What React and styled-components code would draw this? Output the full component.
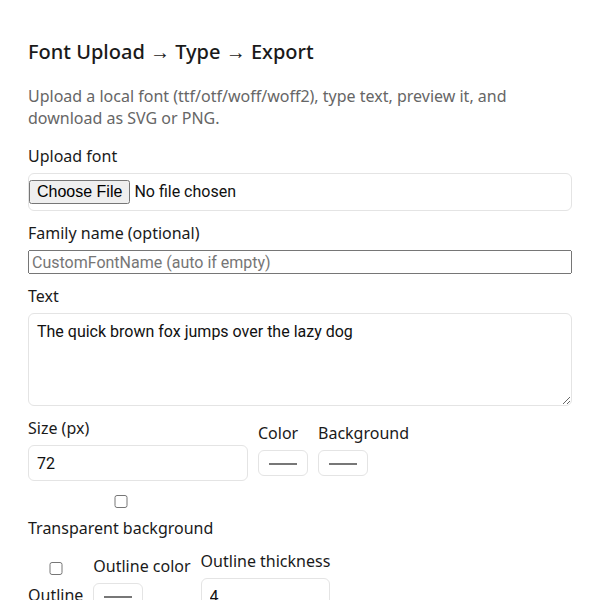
import React, { useState } from "react"
import styled, { createGlobalStyle } from "styled-components"

const GlobalStyle = createGlobalStyle`
  *, *::before, *::after {
    box-sizing: border-box;
  }
  body {
    margin: 0;
    background: #fff;
    color: #1a1a1a;
    font-family: "Noto Sans", "Open Sans", sans-serif;
    font-size: 16px;
  }
`

const Page = styled.main`
  padding: 28px;
`

const Title = styled.h1`
  margin: 10px 0 20px;
  font-size: 20px;
  font-weight: 500;
  line-height: 27px;
`

const Intro = styled.p`
  margin: 0 0 16px;
  color: #666;
  line-height: 22px;
`

const Form = styled.form`
  display: flex;
  flex-direction: column;
  gap: 11px;
`

const Row = styled.div`
  display: flex;
  align-items: center;
  gap: 10px;
`

const Field = styled.label`
  display: flex;
  flex-direction: column;
  gap: 6px;
  width: ${props => (props.width ? `${props.width}px` : "auto")};
  line-height: 22px;
`

const boxed = `
  font-family: Roboto, "Liberation Sans", sans-serif;
  font-size: 16px;
  color: #111;
  background: #fff;
  border: 1px solid #e4e4e4;
  border-radius: 6px;
`

const FileInput = styled.input.attrs({ type: "file" })`
  ${boxed}
  width: 100%;
  height: 38px;
  padding: 6px 0;
`

const TextInput = styled.input.attrs({ type: "text" })`
  width: 100%;
  height: 24px;
  font-family: Roboto, "Liberation Sans", sans-serif;
  font-size: 16px;
  &::placeholder {
    color: #767676;
  }
`

const TextArea = styled.textarea`
  ${boxed}
  display: block;
  width: 100%;
  height: 93px;
  padding: 8px;
`

const NumberInput = styled.input.attrs({ type: "number" })`
  ${boxed}
  width: 0;
  min-width: 100%;
  height: 36px;
  padding: 8px;
`

const ColorInput = styled.input.attrs({ type: "color" })`
  ${boxed}
  width: 50px;
  height: 26px;
  padding: 8px;
`

const Check = styled.input.attrs({ type: "checkbox" })`
  margin: 3px 3px 3px 4px;
`

export default function App() {
  const [family, setFamily] = useState("")
  const [text, setText] = useState("The quick brown fox jumps over the lazy dog")
  const [size, setSize] = useState(72)
  const [color, setColor] = useState("#111111")
  const [background, setBackground] = useState("#ffffff")
  const [transparent, setTransparent] = useState(false)
  const [outline, setOutline] = useState(false)
  const [outlineColor, setOutlineColor] = useState("#000000")
  const [thickness, setThickness] = useState(4)

  return (
    <>
      <GlobalStyle />
      <Page>
        <Title>Font Upload → Type → Export</Title>
        <Intro>
          Upload a local font (ttf/otf/woff/woff2), type text, preview it, and
          download as SVG or PNG.
        </Intro>
        <Form onSubmit={e => e.preventDefault()}>
          <Field>
            <span>Upload font</span>
            <FileInput accept=".ttf,.otf,.woff,.woff2" />
          </Field>
          <Field>
            <span>Family name (optional)</span>
            <TextInput
              placeholder="CustomFontName (auto if empty)"
              value={family}
              onChange={e => setFamily(e.target.value)}
            />
          </Field>
          <Field>
            <span>Text</span>
            <TextArea rows={4} value={text} onChange={e => setText(e.target.value)} />
          </Field>
          <Row>
            <Field width={220}>
              <span>Size (px)</span>
              <NumberInput value={size} onChange={e => setSize(e.target.value)} />
            </Field>
            <Field>
              <span>Color</span>
              <ColorInput value={color} onChange={e => setColor(e.target.value)} />
            </Field>
            <Field>
              <span>Background</span>
              <ColorInput
                value={background}
                onChange={e => setBackground(e.target.value)}
              />
            </Field>
          </Row>
          <Row>
            <Field>
              <Check
                checked={transparent}
                onChange={e => setTransparent(e.target.checked)}
              />
              <span>Transparent background</span>
            </Field>
          </Row>
          <Row>
            <Field>
              <Check checked={outline} onChange={e => setOutline(e.target.checked)} />
              <span>Outline</span>
            </Field>
            <Field>
              <span>Outline color</span>
              <ColorInput
                value={outlineColor}
                onChange={e => setOutlineColor(e.target.value)}
              />
            </Field>
            <Field>
              <span>Outline thickness</span>
              <NumberInput
                value={thickness}
                onChange={e => setThickness(e.target.value)}
              />
            </Field>
          </Row>
        </Form>
      </Page>
    </>
  )
}
